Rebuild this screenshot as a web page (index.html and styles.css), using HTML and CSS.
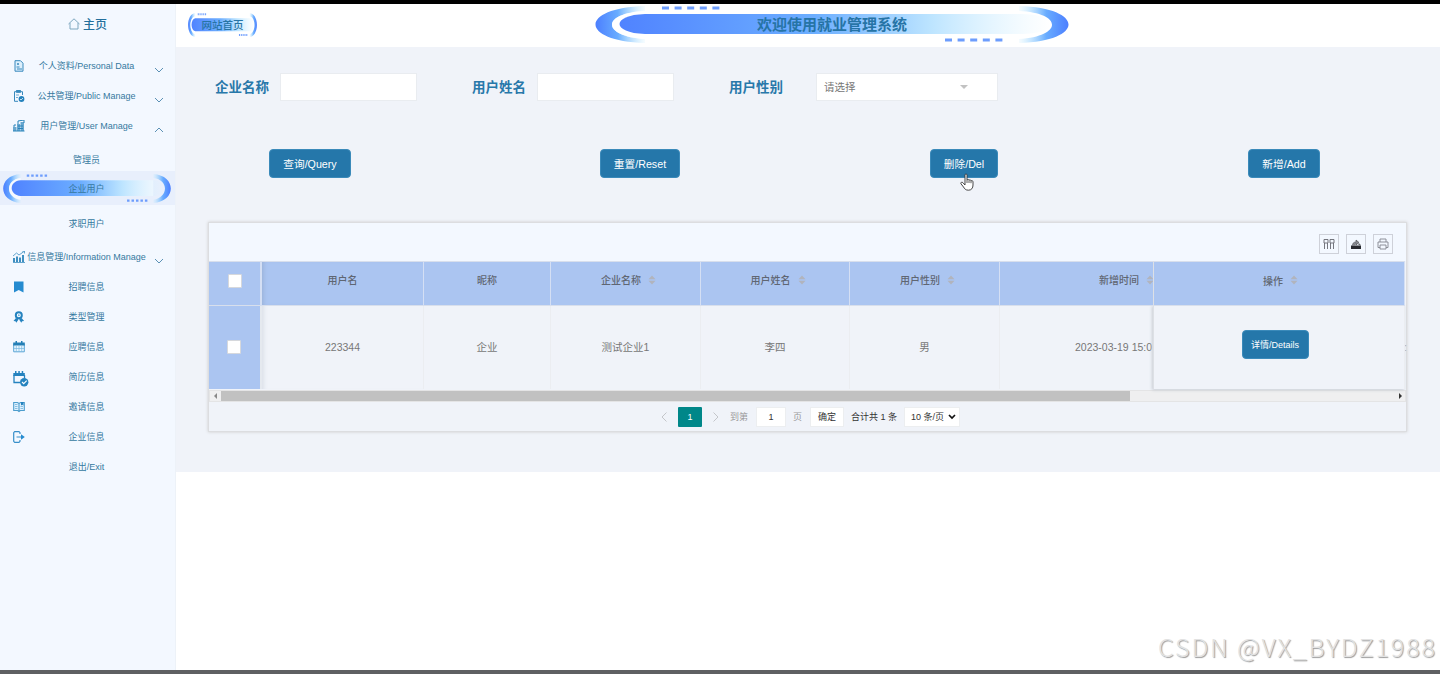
FILE: index.html
```html
<!DOCTYPE html>
<html lang="zh-CN">
<head>
<meta charset="utf-8">
<title>就业管理系统</title>
<link rel="stylesheet" href="styles.css">
</head>
<body>
<svg class="defs" width="0" height="0" aria-hidden="true">
  <defs>
    <linearGradient id="bar"><stop offset="0" stop-color="#5083ff"/><stop offset=".45" stop-color="#6caeff"/><stop offset=".72" stop-color="#bce4ff"/><stop offset="1" stop-color="#d8f2ff" stop-opacity="0"/></linearGradient>
    <linearGradient id="arcL"><stop offset="0" stop-color="#4c7fff"/><stop offset=".45" stop-color="#68acff"/><stop offset="1" stop-color="#a6e2ff" stop-opacity=".1"/></linearGradient>
    <linearGradient id="arcR"><stop offset="0" stop-color="#a6e2ff" stop-opacity=".1"/><stop offset=".55" stop-color="#68acff"/><stop offset="1" stop-color="#4c7fff"/></linearGradient>
    <symbol id="capsule" viewBox="0 0 474 37" preserveAspectRatio="none">
      <path d="M50 0C-16 2-16 35 50 37V33C6 30 6 7 50 5Z" fill="url(#arcL)"/>
      <path d="M424 0C490 2 490 35 424 37V33C468 30 468 7 424 5Z" fill="url(#arcR)"/>
      <path d="M50 5C6 7 6 30 50 33V28H424V8H50Z" fill="#fff" opacity=".6"/>
      <path d="M50 8H424C467 8 467 28 424 28H50C16 27 16 9 50 8Z" fill="url(#bar)"/>
      <path d="M67 2H124.500M350 34H407.500" stroke="#6d9dfd" stroke-width="3" stroke-dasharray="7 5.600"/>
    </symbol>
    <symbol id="sort" viewBox="0 0 8 10"><path d="M4 .5 7.500 4.300h-7zM4 9.500 7.500 5.700h-7z" fill="#b1b4bd"/></symbol>
    <symbol id="down" viewBox="0 0 10 6"><path d="M1 1l4 4 4-4" fill="none" stroke="#5b91b5"/></symbol>
  </defs>
</svg>
<div class="topbar"></div>
<div class="app">
  <nav class="side">
    <a class="home"><svg width="12" height="12" viewBox="0 0 12 12"><path d="M.5 6 6 .8 11.500 6M2 5v6h8V5" fill="none" stroke="#7ea7bf"/></svg>主页</a>
    <a class="item"><svg class="ico" viewBox="0 0 12 12"><path d="M2 .7h5.500l2.500 2.500v8H2z" fill="#dceffc" stroke="#3889bd"/><circle cx="5" cy="4" r="1" fill="#3889bd"/><path d="M3.500 7h3M4 9h5" stroke="#3889bd"/></svg><span>个人资料/Personal Data</span><svg class="arrow"><use href="#down"/></svg></a>
    <a class="item"><svg class="ico" viewBox="0 0 12 12"><path d="M5 11.300H1.500V1.700H9.500V5" fill="none" stroke="#3889bd"/><path d="M3.500 0h4v2.500h-4zM3 5h3M3 7.500h2" fill="#3889bd" stroke="#3889bd" stroke-width=".7"/><circle cx="8.500" cy="9" r="2.900" fill="#2583bd"/><path d="M7 9l1 1 2-2" fill="none" stroke="#fff" stroke-width=".7"/></svg><span>公共管理/Public Manage</span><svg class="arrow"><use href="#down"/></svg></a>
    <a class="item"><svg class="ico" viewBox="0 0 12 12"><path d="M0 7h3.500v4H0zM4 4h3v7H4zM7.500 2h3.500v9H7.500z" fill="#68a7cf"/><path d="M0 11h11.500M5 4V1l6-1v3M5 6h5M5 8.500h5M1 7V5h2" fill="none" stroke="#2883ba"/></svg><span>用户管理/User Manage</span><svg class="arrow up"><use href="#down"/></svg></a>
    <a class="item sub">管理员</a>
    <a class="item sub active"><svg class="pill"><use href="#capsule"/></svg><span>企业用户</span></a>
    <a class="item sub last">求职用户</a>
    <a class="item"><svg class="ico" viewBox="0 0 12 12"><path d="M0 7h2v4H0zM3 5.500h2V11H3zM6 6.500h2V11H6zM9 4h2v7H9z" fill="#3e8fc1"/><path d="M0 11.500h12M0 5l3.500-3L6 4l5-3.500M9 0h2.500v2.500" fill="none" stroke="#3e8fc1" stroke-width=".8"/></svg><span>信息管理/Information Manage</span><svg class="arrow"><use href="#down"/></svg></a>
    <a class="item"><svg class="ico" viewBox="0 0 12 12"><path d="M1 .5h9.500v11L5.700 9 1 11.500z" fill="#258bd0"/></svg><span>招聘信息</span></a>
    <a class="item"><svg class="ico" viewBox="0 0 12 12"><circle cx="5.800" cy="4.300" r="3" fill="#fff" stroke="#2583bf" stroke-width="2"/><circle cx="5.800" cy="4.300" r="1" fill="#69b0df"/><path d="M3 7 .5 10l2 .2.800 1.600L5.500 8.500M8.600 7l2.500 3-2 .2-.8 1.600L6.100 8.500" fill="#2583bf"/></svg><span>类型管理</span></a>
    <a class="item"><svg class="ico" viewBox="0 0 12 12"><path d="M.7 3.500h10.600v7.300H.7z" fill="#e8f6ff" stroke="#5aa6d5"/><path d="M.2 1.500h11.600v3H.2zM2.500 0h1.500v2H2.500zM8 0h1.500v2H8z" fill="#247fb6"/><path d="M3.300 5v5.500M6 5v5.500M8.700 5v5.500M1 7.500h10" stroke="#78b8df" stroke-width=".7"/></svg><span>应聘信息</span></a>
    <a class="item"><svg class="ico big" viewBox="0 0 16 16"><path d="M1 4v7.500h6M11.500 7V4" fill="none" stroke="#2583bf" stroke-width="1.300"/><path d="M.3 2h11.500v3H.3zM2 0h1.500v3H2zM5.300 0h1.500v3H5.300zM8.700 0h1.500v3H8.700z" fill="#2583bf"/><circle cx="11.200" cy="11.200" r="4.200" fill="#2583bf"/><path d="M9 11l1.700 1.700 3-3" fill="none" stroke="#fff" stroke-width="1.100"/></svg><span>简历信息</span></a>
    <a class="item"><svg class="ico" viewBox="0 0 12 12"><path d="M6 2.500 4.500 1.500H.7V9.500h4l1.300 1 1.300-1h4V1.500H7.500L6 2.500V10" fill="#dff1fe" stroke="#4c9dcd" stroke-width="1.100"/><path d="M2 3.500h2.500M2 5.500h2.500M2 7.500h2.500M7.500 5.500H10M7.500 7.500H10" stroke="#7db9df" stroke-width=".9"/><path d="M8 1h2.500v3.500L9.200 3.700 8 4.500z" fill="#2583bf"/></svg><span>邀请信息</span></a>
    <a class="item"><svg class="ico" viewBox="0 0 12 12"><path d="M7 3V1.700L6 .7H1.700l-1 1v8.600l1 1H6l1-1V9M3.500 6H10" fill="none" stroke="#388fca" stroke-width="1.200"/><path d="M8 3.300 11.800 6 8 8.700z" fill="#258bd0"/></svg><span>企业信息</span></a>
    <a class="item"><span>退出/Exit</span></a>
  </nav>
  <main class="main">
    <header class="head">
      <div class="site"><svg><use href="#capsule"/></svg><b>网站首页</b></div>
      <div class="banner"><svg><use href="#capsule"/></svg><b>欢迎使用就业管理系统</b></div>
    </header>
    <section class="content">
      <div class="filters">
        <label>企业名称</label><div class="field"></div>
        <label>用户姓名</label><div class="field"></div>
        <label>用户性别</label><div class="field select">请选择<i></i></div>
      </div>
      <div class="actions">
        <button class="btn query">查询/Query</button>
        <button class="btn reset">重置/Reset</button>
        <button class="btn del">删除/Del<svg class="cursor" viewBox="0 0 14 18"><path d="M5 10V2.200C5 .5 7 .5 7 2.200V7c.5-.8 2-.6 2 .3.600-.7 1.900-.4 2 .5.900-.5 2 0 2 1V12c0 3-1.500 5.200-4.500 5.200-3 0-4-1.500-5-3.200L.9 10.700C.4 9.400 2 8.600 2.900 9.700L5 12z" fill="#fff" stroke="#333" stroke-width=".9"/><path d="M7 7v3M9 7.500V10M11 8v2.200" stroke="#333" stroke-width=".8"/></svg></button>
        <button class="btn add">新增/Add</button>
      </div>
      <div class="panel">
        <div class="tools">
          <span><svg viewBox="0 0 12 12"><path d="M1 1.500h4v3.500H1zM7 1.500h4v3.500H7zM1.500 5v6M4.500 5v6M7.500 5v6M10.500 5v6" fill="none" stroke="#666871" stroke-width=".9"/></svg></span>
          <span><svg viewBox="0 0 12 12"><path d="M1 7.500h10v3.500H1z" fill="#282a30"/><path d="M2.500 7.500c0-2.500 1.500-3.500 3.500-3.500V2l3 2.500L6 7V5.500L4 7.500M8 6h2v1.500" fill="#8a8c93" stroke="#44464c" stroke-width=".6"/></svg></span>
          <span><svg viewBox="0 0 12 12"><path d="M3 4V1h6v3M3 9.500H1V4h10v5.500H9M3 7h6v4H3z" fill="none" stroke="#85878e" stroke-width=".9"/></svg></span>
        </div>
        <div class="grid thead">
          <div class="box"><i></i></div><div>用户名</div><div>昵称</div>
          <div class="sortable">企业名称<svg class="sort"><use href="#sort"/></svg></div>
          <div class="sortable">用户姓名<svg class="sort"><use href="#sort"/></svg></div>
          <div class="sortable">用户性别<svg class="sort"><use href="#sort"/></svg></div>
          <div class="clip">新增时间<svg class="sort"><use href="#sort"/></svg></div>
          <div class="fixed">操作<svg class="sort"><use href="#sort"/></svg></div>
        </div>
        <div class="grid row">
          <div class="box"><i></i></div><div>223344</div><div>企业</div><div>测试企业1</div><div>李四</div><div>男</div>
          <div class="clip">2023-03-19 15:0</div>
          <div class="fixed"><button class="btn details">详情/Details</button></div><div class="peek">:</div>
        </div>
        <div class="scroll"><i class="l"></i><div class="thumb"></div><i class="r"></i></div>
        <div class="pager">
          <svg viewBox="0 0 6 10"><path d="M5.500.5 1 5l4.500 4.500" fill="none" stroke="#c4c6ca"/></svg>
          <span class="cur">1</span>
          <svg viewBox="0 0 6 10"><path d="M.5.5 5 5 .5 9.500" fill="none" stroke="#c4c6ca"/></svg>
          <span class="dim to">到第</span><span class="white num">1</span><span class="dim">页</span>
          <span class="white ok">确定</span><span class="total">合计共 1 条</span>
          <span class="white size">10 条/页<svg viewBox="0 0 8 6"><path d="M1 1l3 3 3-3" fill="none" stroke="#111" stroke-width="1.700"/></svg></span>
        </div>
      </div>
    </section>
  </main>
</div>
<div class="bottombar"></div>
<div class="mark">CSDN @VX_BYDZ1988</div>
</body>
</html>
```
FILE: styles.css
```css
* { box-sizing: border-box; }
body { margin: 0; width: 1440px; height: 674px; overflow: hidden; background: #fff; font-family: "Liberation Sans", "Noto Sans CJK SC", sans-serif; display: flex; flex-direction: column; position: relative; }
.defs { position: absolute; }
.topbar { height: 4px; background: #000; flex: none; }
.app { display: flex; height: 666px; flex: none; }
.bottombar { height: 4px; background: #5f6063; flex: none; }
.side { width: 176px; background: #f3f8ff; border-right: 1px solid #edf2f8; font-size: 9px; color: #3578a0; flex: none; }
.home { display: flex; height: 40px; margin-bottom: 7px; align-items: center; justify-content: center; gap: 3px; font-size: 12px; font-weight: 500; color: #236f9c; }
.home { padding-bottom: 1px; }
.item { display: flex; height: 30px; align-items: center; justify-content: center; position: relative; white-space: nowrap; padding: 0 2px 2px 0; }
.ico { position: absolute; left: 13px; top: 8.500px; width: 12px; height: 12px; }
.ico.big { width: 16px; height: 16px; }
.arrow { position: absolute; left: 154px; top: 16px; width: 10px; height: 6px; }
.arrow.up { transform: rotate(180deg); }
.sub { padding-top: 8px; }
.sub.active { height: 34px; padding-top: 3px; background: #e8effc; }
.sub.last { height: 37px; padding: 0 2px 0 0; }
.pill { position: absolute; left: 3px; top: 3px; width: 168px; height: 29px; }
.active span { position: relative; }
.main { flex: 1; min-width: 0; }
.head { height: 43px; display: flex; align-items: flex-start; color: #2674a6; padding-left: 12px; }
.site, .banner { position: relative; display: flex; align-items: center; justify-content: center; }
.site svg, .banner svg { position: absolute; width: 100%; height: 100%; left: 0; top: 0; }
.site b, .banner b { position: relative; top: -1px; }
.site { width: 69px; height: 24px; margin-top: 9px; font-size: 10.5px; }
.site b { font-weight: 500; }
.banner { width: 474px; height: 37px; margin: 2px 0 0 338px; font-size: 15px; }
.content { height: 425px; background: #f0f3f9; padding: 26px 33px 0 32px; }
.filters { display: flex; height: 28px; align-items: center; padding-left: 7px; font-size: 13.500px; color: #2878aa; font-weight: 700; }
.filters label { width: 65px; padding-bottom: 2px; white-space: nowrap; flex: none; }
.field { width: 137px; height: 28px; background: #fff; border: 1px solid #e9ecf0; margin-right: 55px; flex: none; }
.field.select { width: 182px; margin: 0 0 0 22px; font-weight: 400; font-size: 10.500px; color: #777; display: flex; align-items: center; padding: 0 29px 1px 7px; justify-content: space-between; }
.select i { border: 4.500px solid transparent; border-top-color: #c2c2c2; border-bottom: 0; }
.actions { display: flex; margin-top: 48px; height: 29px; padding-left: 61px; }
.btn { border: 1px solid #3b8aba; border-radius: 4px; background: #2577aa; color: #fff; font: 10.700px "Liberation Sans", "Noto Sans CJK SC", sans-serif; height: 29px; padding: 0 0 1px; flex: none; white-space: nowrap; position: relative; }
.query { width: 82px; }
.reset { width: 80px; margin-left: 249px; }
.del { width: 68px; margin-left: 250px; }
.add { width: 72px; margin-left: 250px; }
.cursor { position: absolute; width: 14px; height: 18px; left: 29px; top: 23px; }
.panel { margin-top: 44px; width: 1199px; height: 210px; border: 1px solid #dcdde0; box-shadow: 0 0 3px #ccc; }
.tools { height: 38px; background: #f3f8ff; display: flex; gap: 7px; justify-content: flex-end; align-items: center; padding: 4px 13px 0 0; }
.tools span { width: 20px; height: 20px; border: 1px solid #ced1d9; display: flex; align-items: center; justify-content: center; }
.tools svg { width: 12px; height: 12px; }
.grid { display: grid; grid-template-columns: 53px 162px 127px 150px 149px 150px 153px 252px 1px; font-size: 10.500px; color: #777; position: relative; }
.grid > div { display: flex; align-items: center; justify-content: center; white-space: nowrap; border-right: 1px solid #ebedf1; min-width: 0; }
.row > div { padding-bottom: 1px; }
.thead { height: 44px; color: #5f6672; font-size: 10px; font-weight: 500; }
.thead > div { background: #abc5f1; border-color: #d4dff4; border-top: 1px solid #d8dfec; border-bottom: 1px solid #d8dfec; padding-bottom: 8px; }
.thead > .box { padding-bottom: 5px; border-right-width: 2px; }
.thead > .sortable { padding-left: 6px; }
.row { height: 84px; }
.row > .box { background: #abc5f1; border-right: 2px solid #e5e9ef; padding-right: 1px; }
.box i { width: 14px; height: 14px; background: #fff; border: 1px solid #d6d8dc; border-radius: 1px; }
.box + div { box-shadow: inset 5px 0 5px -4px #d5dae3; }
.thead .box + div { box-shadow: inset 4px 0 5px -3px #98afd4; }
.grid > .clip { justify-content: flex-start; overflow: hidden; border-right: 0; }
.thead > .clip { padding-left: 99px; }
.row > .clip { padding-left: 75px; }
.grid > .fixed { border-left: 1px solid #dde0e5; box-shadow: -1px 1px 3px #c8ccd3; }
.row > .fixed { padding-bottom: 5px; padding-right: 8px; z-index: 0; }
.thead > .fixed { height: 45px; padding-bottom: 7px; padding-left: 3px; z-index: 1; box-shadow: none; }
.thead { z-index: 1; }
.grid > .peek { border: 0; overflow: visible; color: #aaa; }
.sort { width: 8px; height: 10px; margin-left: 7px; flex: none; }
.details { width: 67px; font-size: 9px; }
.scroll { height: 12px; background: #efeff0; margin-top: 1px; display: flex; align-items: center; border: 1px solid #e4e4e5; }
.thumb { width: 909px; height: 10px; background: #c1c1c1; margin-left: 4px; }
.l { border: 3px solid transparent; border-right-color: #888; margin-left: 1px; width: 0; }
.r { border: 3px solid transparent; border-left-color: #333; margin-left: auto; margin-right: 0; }
.pager { display: flex; height: 29px; align-items: center; padding-left: 452px; font-size: 9px; color: #333; white-space: nowrap; }
.pager > svg { width: 6px; height: 10px; }
.cur { width: 24px; height: 20px; margin: 0 11px; background: #008789; color: #fff; text-align: center; line-height: 20px; border-radius: 1px; }
.dim { color: #999; }
.to { margin-left: 11px; }
.white { background: #fff; border: 1px solid #eceef0; height: 20px; line-height: 18px; text-align: center; }
.num { width: 30px; margin: 0 7px 0 8px; }
.ok { width: 34px; margin: 0 7px 0 8px; }
.size { width: 56px; margin-left: 7px; display: flex; align-items: center; justify-content: space-between; padding: 0 3px 0 6px; }
.size svg { width: 8px; height: 6px; }
.mark { position: absolute; left: 1158px; top: 628px; font: 300 25px/36px "Noto Sans CJK SC", sans-serif; letter-spacing: 1.900px; color: #e2e2e2; text-shadow: 1px 1px 1px #999; white-space: nowrap; }
```
